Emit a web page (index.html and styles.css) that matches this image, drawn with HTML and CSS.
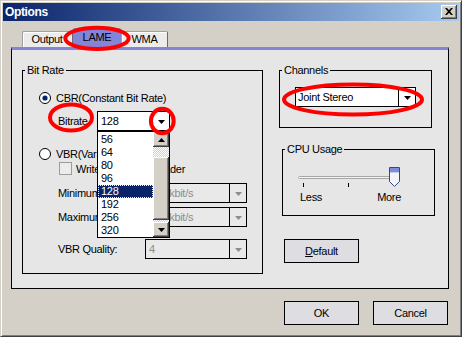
FILE: index.html
```html
<!DOCTYPE html>
<html>
<head>
<meta charset="utf-8">
<title>Options</title>
<link rel="stylesheet" href="styles.css">
</head>
<body>
<div class="screen">
  <div class="window">
    <div class="titlebar">
      <span class="title">Options</span>
      <div class="close-btn">
        <svg width="8" height="7" viewBox="0 0 8 7"><path d="M0 0h2l2 2.2L6 0h2L5.1 3.5 8 7H6L4 4.8 2 7H0l2.9-3.5z" fill="#000"/></svg>
      </div>
    </div>
    <div class="client">
      <div class="tabs">
        <div class="tab tab-output">Output</div>
        <div class="tab tab-lame">LAME</div>
        <div class="tab tab-wma">WMA</div>
      </div>
      <div class="panel">
        <div class="group group-bitrate">
          <div class="group-label">Bit Rate</div>
          <div class="row row-cbr">
            <svg class="radio" width="12" height="12" viewBox="0 0 12 12"><circle cx="6" cy="6" r="5.5" fill="#fff" stroke="#000"/><circle cx="6" cy="6" r="2.6" fill="#0a246a"/></svg>
            <span>CBR(Constant Bit Rate)</span>
          </div>
          <div class="row row-bitrate">
            <span class="lbl lbl-short">Bitrate</span>
            <div class="combo combo-bitrate">
              <span class="combo-value">128</span>
              <span class="combo-arrow"><svg width="7" height="4" viewBox="0 0 7 4"><path d="M0 0h7L3.5 4z" fill="#000"/></svg></span>
              <div class="dropdown">
                <div class="dd-items">
                  <div class="dd-item">56</div>
                  <div class="dd-item">64</div>
                  <div class="dd-item">80</div>
                  <div class="dd-item">96</div>
                  <div class="dd-item dd-selected">128</div>
                  <div class="dd-item">192</div>
                  <div class="dd-item">256</div>
                  <div class="dd-item">320</div>
                </div>
                <div class="scrollbar">
                  <div class="sb-btn"><svg width="7" height="4" viewBox="0 0 7 4"><path d="M3.5 0L7 4H0z" fill="#000"/></svg></div>
                  <div class="sb-track">
                    <div class="sb-thumb"></div>
                  </div>
                  <div class="sb-btn"><svg width="7" height="4" viewBox="0 0 7 4"><path d="M0 0h7L3.5 4z" fill="#000"/></svg></div>
                </div>
              </div>
            </div>
          </div>
          <div class="row row-vbr">
            <svg class="radio" width="12" height="12" viewBox="0 0 12 12"><circle cx="6" cy="6" r="5.5" fill="#fff" stroke="#000"/></svg>
            <span>VBR(Variable Bit Rate)</span>
          </div>
          <div class="row row-check">
            <span class="checkbox"></span>
            <span>Write Xing VBR Header</span>
          </div>
          <div class="row row-min">
            <span class="lbl lbl-long">Minimum bitrate</span>
            <div class="combo combo-disabled">
              <span class="combo-value">128 kbit/s</span>
              <span class="combo-arrow"><svg width="7" height="4" viewBox="0 0 7 4"><path d="M0 0h7L3.5 4z" fill="#8c8c8c"/></svg></span>
            </div>
          </div>
          <div class="row row-max">
            <span class="lbl lbl-long">Maximum bitrate</span>
            <div class="combo combo-disabled">
              <span class="combo-value">320 kbit/s</span>
              <span class="combo-arrow"><svg width="7" height="4" viewBox="0 0 7 4"><path d="M0 0h7L3.5 4z" fill="#8c8c8c"/></svg></span>
            </div>
          </div>
          <div class="row row-q">
            <span class="lbl lbl-long">VBR Quality:</span>
            <div class="combo combo-disabled">
              <span class="combo-value">4</span>
              <span class="combo-arrow"><svg width="7" height="4" viewBox="0 0 7 4"><path d="M0 0h7L3.5 4z" fill="#8c8c8c"/></svg></span>
            </div>
          </div>
        </div>

        <div class="right-col">
          <div class="group group-channels">
            <div class="group-label">Channels</div>
            <div class="combo combo-channels">
              <span class="combo-value">Joint Stereo</span>
              <span class="combo-arrow"><svg width="7" height="4" viewBox="0 0 7 4"><path d="M0 0h7L3.5 4z" fill="#000"/></svg></span>
            </div>
          </div>
          <div class="group group-cpu">
            <div class="group-label">CPU Usage</div>
            <div class="slider">
              <div class="slider-track"></div>
              <div class="slider-ticks">
                <span class="tick tick-1"></span>
                <span class="tick tick-2"></span>
              </div>
              <svg class="slider-thumb" width="11" height="20" viewBox="0 0 11 20">
                <path d="M0.5 0.5H10.5V14.5L5.5 19.5L0.5 14.5Z" fill="#f4f4f8" stroke="#2c4a86"/>
                <rect x="1" y="1" width="9" height="4" fill="#7e8cdc"/>
                <rect x="1" y="5" width="9" height="1" fill="#c8cdf0"/>
              </svg>
              <div class="slider-labels">
                <span class="sl-less">Less</span>
                <span class="sl-more">More</span>
              </div>
            </div>
          </div>
          <div class="btn btn-default"><span><u>D</u>efault</span></div>
        </div>
      </div>
      <div class="buttons">
        <div class="btn">OK</div>
        <div class="btn">Cancel</div>
      </div>
    </div>
  </div>
  <svg class="annotations" width="462" height="337" viewBox="0 0 462 337">
    <ellipse cx="97" cy="38.3" rx="31.7" ry="10.6" fill="none" stroke="#ff0000" stroke-width="4"/>
    <ellipse cx="71" cy="117.5" rx="21" ry="13" fill="none" stroke="#ff0000" stroke-width="4"/>
    <ellipse cx="162.3" cy="121" rx="11.4" ry="12.2" fill="none" stroke="#ff0000" stroke-width="4"/>
    <ellipse cx="353" cy="99.5" rx="69" ry="15" fill="none" stroke="#ff0000" stroke-width="4"/>
  </svg>
</div>
</body>
</html>
```

FILE: styles.css
```css
* { box-sizing: border-box; }
html, body { margin: 0; padding: 0; }
body {
  background: #d4d0c8;
  font-family: "Liberation Sans", Arial, sans-serif;
  font-size: 11px;
  letter-spacing: -0.3px;
  color: #000;
}
.screen { position: relative; width: 462px; height: 337px; overflow: hidden; }

.window {
  width: 462px;
  height: 337px;
  background: #d4d0c8;
  border: 1px solid;
  border-color: #d4d0c8 #404040 #404040 #d4d0c8;
  box-shadow: inset 1px 1px #ffffff, inset -1px -1px #808080;
  padding: 2px;
  display: flex;
  flex-direction: column;
}

.titlebar {
  height: 18px;
  flex: none;
  background: linear-gradient(to right, #0a246a, #a6caf0);
  display: flex;
  align-items: center;
  justify-content: space-between;
  padding: 0 2px;
}
.title {
  color: #fff;
  font-weight: bold;
  font-size: 12px;
  letter-spacing: -0.35px;
}
.close-btn {
  width: 16px;
  height: 14px;
  background: #d4d0c8;
  box-shadow: inset -1px -1px #404040, inset 1px 1px #ffffff, inset -2px -2px #808080;
  display: flex;
  align-items: center;
  justify-content: center;
  padding-bottom: 1px;
}

.client {
  flex: 1;
  display: flex;
  flex-direction: column;
  padding: 7px 0 0 8px;
}

.tabs {
  height: 19px;
  margin-left: 11px;
  display: flex;
  align-items: flex-end;
}
.tab {
  height: 16px;
  line-height: 15px;
  text-align: center;
  background: #ececec;
  border: 1px solid #a0a0a0;
  border-bottom: none;
  border-right-color: #6a6a6a;
  border-radius: 2px 2px 0 0;
  box-shadow: inset 1px 1px #ffffff;
}
.tab-output { width: 51px; padding-right: 1px; }
.tab-lame {
  width: 48px;
  height: 19px;
  line-height: 19px;
  background: #8484d8;
  border: none;
  box-shadow: none;
}
.tab-wma { width: 47px; }

.panel {
  width: 438px;
  height: 242px;
  flex: none;
  border: 1px solid #000;
  border-top: 3px solid #8484d8;
  background: #e6e6e6;
  display: flex;
  align-items: flex-start;
  padding: 20px 0 0 10px;
}

.group {
  border: 1px solid #000;
  display: flex;
  flex-direction: column;
  align-items: flex-start;
}
.group-label {
  height: 13px;
  line-height: 13px;
  margin: -7px 0 0 2px;
  padding: 0 2px;
  background: #e6e6e6;
}

.group-bitrate { width: 241px; height: 204px; flex: none; }

.row {
  display: flex;
  align-items: center;
  white-space: nowrap;
}
.radio { flex: none; margin-right: 5px; }
.row-cbr { margin-top: 14px; height: 13px; padding-left: 16px; }
.row-bitrate { margin-top: 7px; height: 20px; padding-left: 35px; }
.row-vbr { margin-top: 16px; height: 13px; padding-left: 16px; }
.row-check { margin-top: 2px; height: 13px; padding-left: 36px; }
.row-min { margin-top: 8px; height: 20px; padding-left: 35px; }
.row-max { margin-top: 4px; height: 20px; padding-left: 35px; }
.row-q { margin-top: 12px; height: 20px; padding-left: 35px; }

.lbl-short { width: 39px; flex: none; }
.lbl-long { width: 87px; flex: none; }

.checkbox {
  width: 13px;
  height: 13px;
  flex: none;
  border: 1px solid #9c9c9c;
  background: #ececec;
  margin-right: 4px;
}

.combo {
  display: flex;
  height: 20px;
  border: 1px solid #000;
  background: #fff;
  flex: none;
}
.combo-value {
  flex: 1;
  padding-left: 3px;
  line-height: 18px;
  white-space: nowrap;
  overflow: hidden;
}
.combo-arrow {
  width: 17px;
  flex: none;
  border-left: 1px solid #000;
  display: flex;
  align-items: center;
  justify-content: center;
  padding-top: 1px;
}
.combo-bitrate { width: 73px; position: relative; }
.combo-disabled { width: 102px; background: #e9e9e9; color: #8c8c8c; }
.combo-channels { width: 121px; margin: 10px 0 0 15px; }
.combo-channels .combo-value { padding-left: 2px; }

.dropdown {
  position: absolute;
  left: -1px;
  top: 19px;
  width: 73px;
  height: 107px;
  border: 1px solid #000;
  background: #fff;
  display: flex;
  z-index: 5;
  color: #000;
}
.dd-items { flex: 1; padding-top: 1px; }
.dd-item { height: 13px; line-height: 13px; padding-left: 3px; }
.dd-selected {
  background: #0a246a;
  color: #fff;
  outline: 1px dotted #ffff80;
  outline-offset: -1px;
}
.scrollbar {
  width: 16px;
  flex: none;
  display: flex;
  flex-direction: column;
}
.sb-btn {
  height: 15px;
  flex: none;
  background: #d4d0c8;
  box-shadow: inset -1px -1px #404040, inset 1px 1px #ffffff, inset -2px -2px #808080;
  display: flex;
  align-items: center;
  justify-content: center;
}
.sb-track {
  flex: 1;
  padding-top: 10px;
  background-color: #ffffff;
  background-image: conic-gradient(#d4d0c8 25%, #ffffff 0 50%, #d4d0c8 0 75%, #ffffff 0);
  background-size: 2px 2px;
}
.sb-thumb {
  height: 63px;
  background: #d4d0c8;
  box-shadow: inset -1px -1px #404040, inset 1px 1px #ffffff, inset -2px -2px #808080;
}

.right-col {
  margin-left: 16px;
  display: flex;
  flex-direction: column;
  align-items: flex-start;
}
.group-channels { width: 153px; height: 58px; }
.group-cpu { width: 153px; height: 67px; margin: 21px 0 0 3px; }

.slider {
  position: relative;
  margin: 11px 0 0 15px;
  width: 104px;
}
.slider-track {
  width: 95px;
  height: 3px;
  margin-top: 9px;
  border: 1px solid #a8a8a8;
  border-radius: 2px;
  background: #f2f2f2;
}
.slider-ticks { display: flex; height: 4px; margin-top: 4px; }
.tick { width: 1px; height: 4px; background: #000; }
.tick-1 { margin-left: 5px; }
.tick-2 { margin-left: 44px; }
.slider-thumb { position: absolute; left: 91px; top: 0; }
.slider-labels {
  display: flex;
  justify-content: space-between;
  margin-top: 4px;
  height: 13px;
  line-height: 13px;
  padding: 0 1px 0 2px;
}

.btn {
  width: 75px;
  height: 24px;
  border: 1px solid #000;
  background: #dedee2;
  display: flex;
  align-items: center;
  justify-content: center;
  flex: none;
}
.btn-default { margin: 23px 0 0 5px; }

.buttons {
  display: flex;
  justify-content: flex-end;
  gap: 14px;
  margin-top: 12px;
  padding-right: 11px;
}

.annotations {
  position: absolute;
  left: 0;
  top: 0;
  z-index: 10;
  pointer-events: none;
}
```
